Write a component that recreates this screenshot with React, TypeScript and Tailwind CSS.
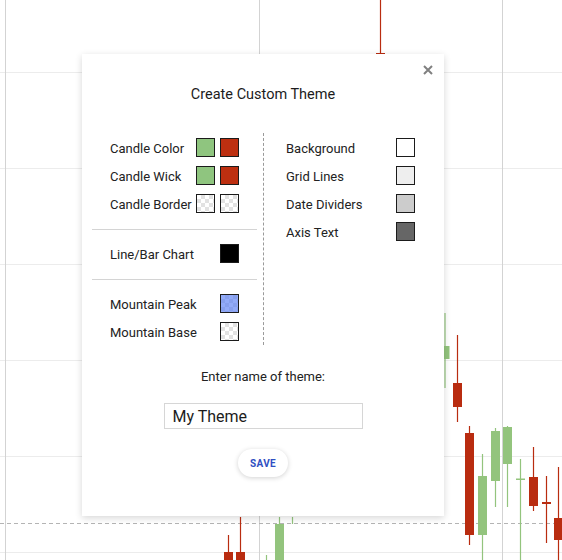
import type { ReactNode } from "react"

// candlestick data for the chart behind the dialog: wick x, wick top/bottom, body top/bottom
type Candle = { x: number; hi: number; lo: number; top?: number; bot?: number; up: boolean }

const candles: Candle[] = [
  { x: 380.5, hi: 0, lo: 120, top: 53, bot: 110, up: false },
  { x: 445, hi: 313, lo: 388, top: 346, bot: 359, up: true },
  { x: 457.5, hi: 335, lo: 422, top: 383, bot: 407, up: false },
  { x: 469.5, hi: 426, lo: 545, top: 433, bot: 535, up: false },
  { x: 482.5, hi: 454, lo: 560, top: 476, bot: 535, up: true },
  { x: 495.5, hi: 428, lo: 507, top: 431, bot: 481, up: true },
  { x: 507.5, hi: 426, lo: 507, top: 427, bot: 464, up: true },
  { x: 520.5, hi: 459, lo: 560, top: 478.5, bot: 480, up: true },
  { x: 533.5, hi: 447, lo: 511, top: 477, bot: 506, up: false },
  { x: 546.5, hi: 476, lo: 543, top: 502, bot: 504, up: false },
  { x: 558.5, hi: 467, lo: 560, top: 518, bot: 540, up: false },
  { x: 228.5, hi: 535, lo: 560, top: 552, bot: 570, up: false },
  { x: 240.5, hi: 517, lo: 560, top: 552, bot: 570, up: false },
  { x: 279.5, hi: 517, lo: 560, top: 524, bot: 570, up: true },
  { x: 266.5, hi: 555, lo: 560, up: true },
  { x: 292.5, hi: 517, lo: 524, up: true },
]

const UP = "#93c47d"
const DOWN = "#b92c10"

function Chart() {
  const rows = [72.5, 168.5, 264.5, 360.5, 456.5, 552.5]
  const cols = [5.5, 259.5, 502.5]
  return (
    <svg width={562} height={560} className="block">
      <rect width={562} height={560} fill="#ffffff" />
      {rows.map(y => (
        <line key={y} x1={0} x2={562} y1={y} y2={y} stroke="#ececec" />
      ))}
      {cols.map(x => (
        <line key={x} x1={x} x2={x} y1={0} y2={560} stroke="#d3d3d3" />
      ))}
      <line x1={0} x2={562} y1={523.5} y2={523.5} stroke="#b4b4b4" strokeDasharray="4 3" />
      {candles.map((c, i) => {
        const fill = c.up ? UP : DOWN
        return (
          <g key={i}>
            <line x1={c.x} x2={c.x} y1={c.hi} y2={c.lo} stroke={fill} strokeWidth={1.2} />
            {c.top !== undefined && c.bot !== undefined && (
              <rect x={c.x - 4.5} y={c.top} width={9} height={Math.max(c.bot - c.top, 1.5)} fill={fill} />
            )}
          </g>
        )
      })}
    </svg>
  )
}

const checker =
  "bg-[image:conic-gradient(#e2e2e2_25%,#ffffff_0_50%,#e2e2e2_0_75%,#ffffff_0)] bg-[length:8px_8px]"

function Swatch({ className }: { className: string }) {
  return <div className={"h-[19px] w-[19px] border border-[#1b1b1b] " + className} />
}

function Row({ label, children }: { label: string; children: ReactNode }) {
  return (
    <div className="flex h-[28px] items-center justify-between">
      <span className="whitespace-nowrap pt-[3px]">{label}</span>
      <div className="flex gap-[5px]">{children}</div>
    </div>
  )
}

function ThemeDialog() {
  return (
    <div className="absolute left-[82px] top-[54px] flex h-[462px] w-[362px] flex-col items-center bg-white shadow-[0_2px_7px_rgba(0,0,0,0.16)]">
      <button className="absolute right-[11px] top-[11px] text-[#808080]">
        <svg width={10} height={10} viewBox="0 0 10 10">
          <path d="M1 1L9 9M9 1L1 9" stroke="currentColor" strokeWidth={2} />
        </svg>
      </button>

      <h2 className="mt-[31px] text-[14.5px] leading-[20px] text-[#1c1c1c]">Create Custom Theme</h2>

      <div className="mt-[28px] flex self-stretch pl-[10px] text-[13px] leading-[18px] text-[#222]">
        <div className="w-[165px]">
          <div className="px-[18px]">
            <Row label="Candle Color">
              <Swatch className="bg-[#8fc57f]" />
              <Swatch className="bg-[#bd2f10]" />
            </Row>
            <Row label="Candle Wick">
              <Swatch className="bg-[#8fc57f]" />
              <Swatch className="bg-[#bd2f10]" />
            </Row>
            <Row label="Candle Border">
              <Swatch className={checker} />
              <Swatch className={checker} />
            </Row>
          </div>
          <div className="mt-[12px] border-t border-[#d4d4d4]" />
          <div className="mt-[9px] px-[18px]">
            <Row label="Line/Bar Chart">
              <Swatch className="bg-black" />
            </Row>
          </div>
          <div className="mt-[12px] border-t border-[#d4d4d4]" />
          <div className="mt-[9px] px-[18px]">
            <Row label="Mountain Peak">
              <Swatch className="bg-[image:linear-gradient(rgba(104,138,246,0.72),rgba(104,138,246,0.72)),conic-gradient(#d8d8d8_25%,#ffffff_0_50%,#d8d8d8_0_75%,#ffffff_0)] bg-[length:8px_8px]" />
            </Row>
            <Row label="Mountain Base">
              <Swatch className={checker} />
            </Row>
          </div>
        </div>

        <div className="ml-[6px] w-[152px] border-l border-dashed border-[#9a9a9a] pl-[22px]">
          <Row label="Background">
            <Swatch className="bg-white" />
          </Row>
          <Row label="Grid Lines">
            <Swatch className="bg-[#eeeeee]" />
          </Row>
          <Row label="Date Dividers">
            <Swatch className="bg-[#cccccc]" />
          </Row>
          <Row label="Axis Text">
            <Swatch className="bg-[#666666]" />
          </Row>
        </div>
      </div>

      <p className="mt-[23px] text-[13px] leading-[18px] text-[#222]">Enter name of theme:</p>

      <input
        defaultValue="My Theme"
        className="mt-[17px] h-[26px] w-[199px] border border-[#d6d6d6] px-[8px] text-[16px] text-[#1c1c1c] outline-none"
      />

      <button className="mt-[20px] h-[28px] w-[50px] rounded-full bg-white text-[10px] font-bold tracking-[0.3px] text-[#2f4fc2] shadow-[0_1px_5px_rgba(0,0,0,0.18)]">
        SAVE
      </button>
    </div>
  )
}

export default function App() {
  return (
    <div className="relative h-[560px] w-[562px] overflow-hidden bg-white font-['Roboto',sans-serif]">
      <Chart />
      <ThemeDialog />
    </div>
  )
}
